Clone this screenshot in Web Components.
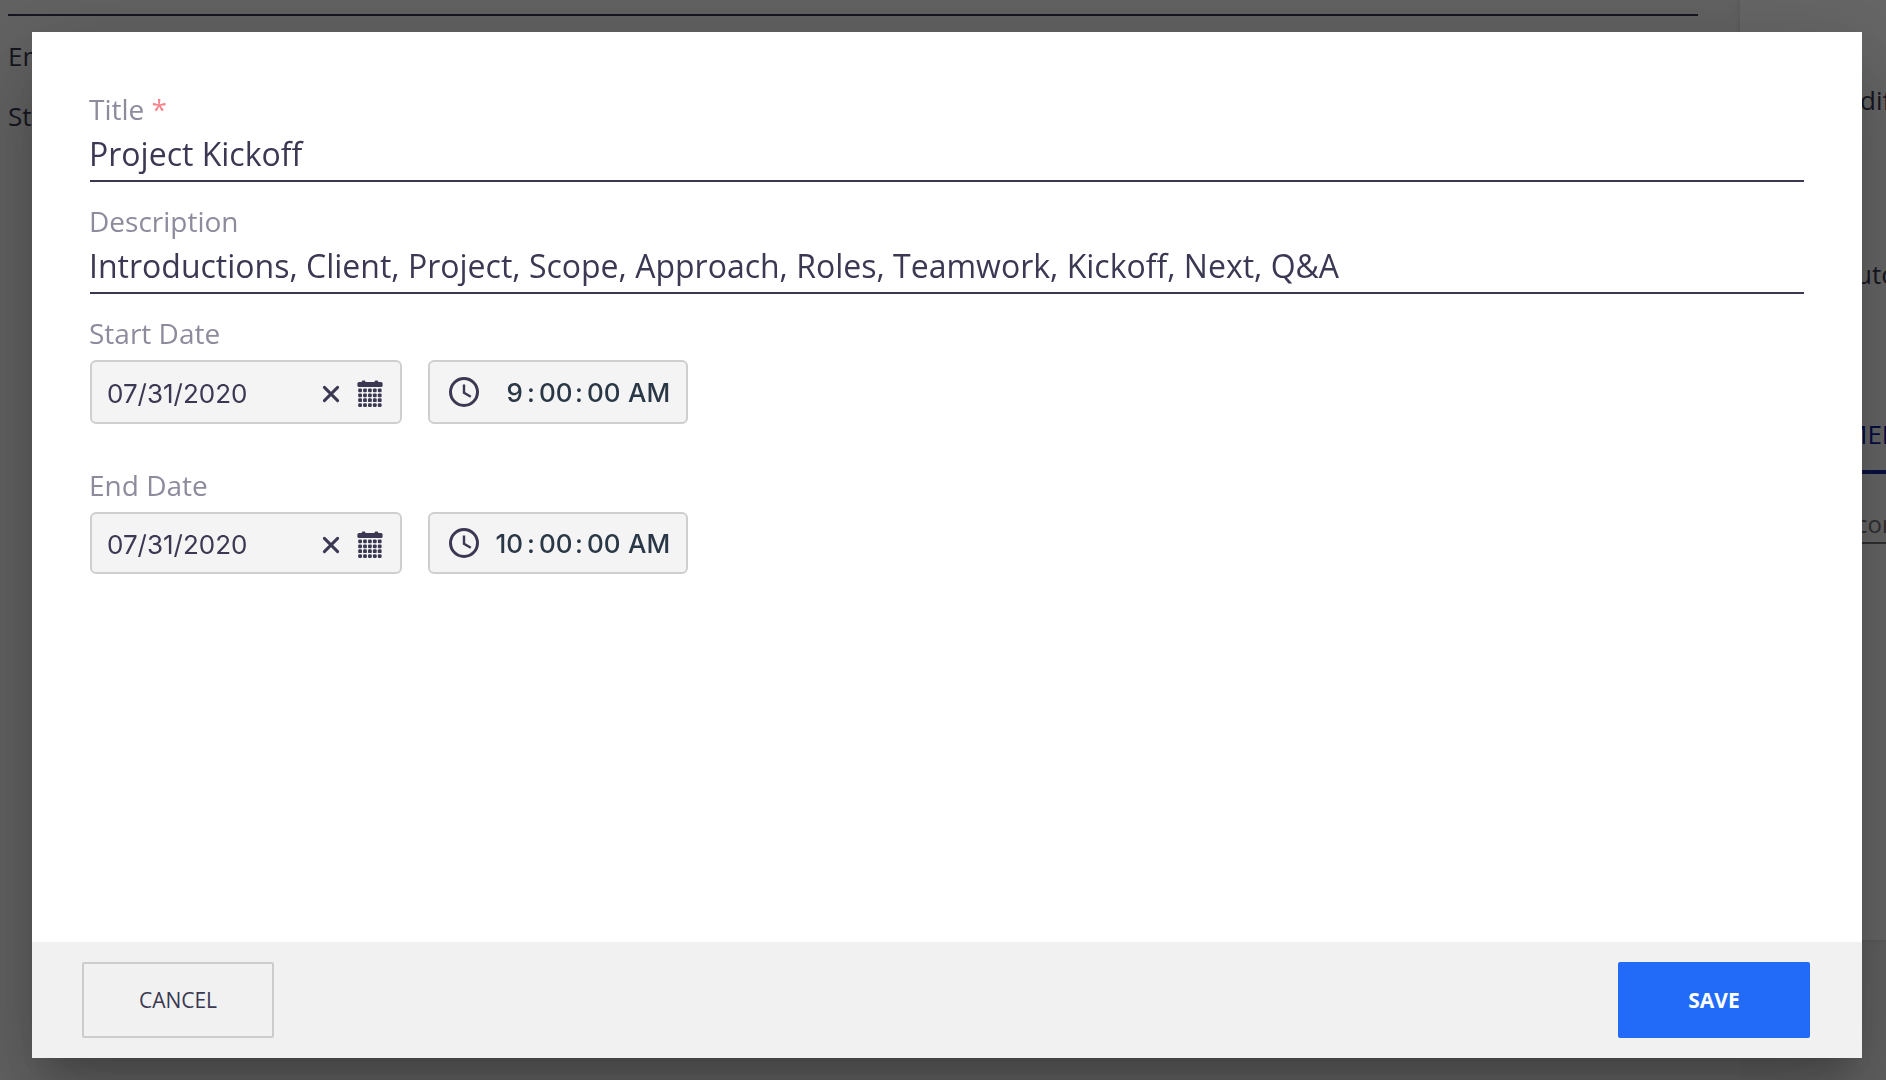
<!DOCTYPE html>
<html lang="en">
<head>
<meta charset="utf-8">
<title>Edit event</title>
<style>
  html, body { height: 100%; margin: 0; }
  body {
    font-family: "Open Sans", "Noto Sans", sans-serif;
    color: #3a3852;
    overflow: hidden;
  }
</style>
</head>
<body>
<page-backdrop></page-backdrop>
<modal-dialog>
  <text-field label="Title" value="Project Kickoff" required></text-field>
  <text-field label="Description" value="Introductions, Client, Project, Scope, Approach, Roles, Teamwork, Kickoff, Next, Q&amp;A"></text-field>
  <date-time-field label="Start Date" date="07/31/2020" hour="9"></date-time-field>
  <date-time-field class="end" label="End Date" date="07/31/2020" hour="10"></date-time-field>
  <action-button slot="actions">CANCEL</action-button>
  <action-button slot="actions" primary>SAVE</action-button>
</modal-dialog>

<script>
class PageBackdrop extends HTMLElement {
  constructor() {
    super();
    this.attachShadow({ mode: 'open' }).innerHTML = `
      <style>
        :host { display: grid; grid-template-columns: 1fr 146px; height: 100vh; background: #f0f0f0;
          font-size: 26px; line-height: 36px; white-space: nowrap; overflow: hidden; }
        main { padding: 14px 42px 0 8px; background: #f4f4f4; }
        .rule { height: 2px; background: #3a3852; margin-bottom: 22px; }
        p { margin: 0 0 24px; }
        aside { height: 940px; box-sizing: border-box; background: #fff; padding: 82px 0 0 116px; overflow: hidden;
          box-shadow: 0 0 6px rgba(0,0,0,.12); }
        .lead { margin-bottom: 138px; padding-left: 4px; }
        .auto { margin-bottom: 124px; }
        .tab { color: #1020a8; border-bottom: 4px solid #1828a8; padding-bottom: 18px; margin: 0 0 32px -12px; }
        .search { font-size: 24px; color: #777; border-bottom: 2px solid #777; }
      </style>
      <main><div class="rule"></div><p>En</p><p>Sta</p></main>
      <aside>
        <p class="lead">dif</p>
        <p class="auto">uto</p>
        <p class="tab">MEN</p>
        <p class="search">con</p>
      </aside>`;
  }
}

class ModalDialog extends HTMLElement {
  constructor() {
    super();
    this.attachShadow({ mode: 'open' }).innerHTML = `
      <style>
        :host { position: fixed; inset: 0; display: flex; box-sizing: border-box;
          padding: 32px 24px 22px 32px; background: rgba(0,0,0,.6); }
        section { flex: 1; display: flex; flex-direction: column; background: #fff;
          box-shadow: 0 22px 30px -14px rgba(0,0,0,.2), 0 48px 76px 6px rgba(0,0,0,.14), 0 18px 92px 16px rgba(0,0,0,.12); }
        .body { flex: 1; display: flex; flex-direction: column; padding: 58px 58px 0; }
        footer { display: flex; justify-content: space-between; padding: 20px 52px 20px 50px; background: #f1f1f1; }
        ::slotted(.end) { margin-top: 42px; --box-height: 62px; }
      </style>
      <section role="dialog" aria-modal="true">
        <div class="body"><slot></slot></div>
        <footer><slot name="actions"></slot></footer>
      </section>`;
  }
}

class TextField extends HTMLElement {
  connectedCallback() {
    this.attachShadow({ mode: 'open' }).innerHTML = `
      <style>
        :host { display: flex; flex-direction: column; margin-bottom: 20px; }
        label { font-size: 28px; line-height: 38px; color: #8d8b9c; margin-left: -1px; }
        b { font-weight: 400; color: #f5848c; }
        input { font: 32px/44px "Open Sans", "Noto Sans", sans-serif; height: 54px; box-sizing: border-box;
          color: inherit; border: 0; border-bottom: 2px solid #3a3852; padding: 0 0 2px; margin: 0;
          width: 100%; background: none; outline: none; text-indent: -1px; }
      </style>
      <label for="field"><span></span></label>
      <input id="field" type="text">`;
    const root = this.shadowRoot;
    root.querySelector('span').textContent = this.getAttribute('label');
    root.querySelector('input').value = this.getAttribute('value');
    if (this.hasAttribute('required'))
      root.querySelector('label').insertAdjacentHTML('beforeend', ' <b>*</b>');
  }
}

class DateTimeField extends HTMLElement {
  connectedCallback() {
    let dots = '';
    for (let r = 0; r < 4; r++)
      for (let c = 0; c < 5; c++)
        dots += `<rect x="${1.2 + c * 4.9}" y="${8.5 + r * 4.9}" width="3.8" height="3.8" rx="1.2"/>`;
    this.attachShadow({ mode: 'open' }).innerHTML = `
      <style>
        :host { display: flex; flex-direction: column; gap: 8px; }
        label { font-size: 28px; line-height: 38px; color: #8d8b9c; margin-left: -1px; }
        .row { display: flex; gap: 26px; }
        .box { display: flex; align-items: center; box-sizing: border-box; height: var(--box-height, 64px);
          border: 2px solid #cfcfcf; border-radius: 6px; background: #f4f4f4; }
        .date { width: 312px; padding: 3px 17px 0 15px; }
        .time { width: 260px; padding: 0 16px 0 19px; color: #2a3746; }
        input, .time span { font: 26px/32px Inter, Roboto, sans-serif; color: inherit; }
        input { border: 0; padding: 0; margin: 0; background: none; outline: none; min-width: 0; }
        .date input { flex: 1; }
        .time input, .time span { font-weight: 500; padding-top: 2px; }
        .hour { width: 38px; text-align: right; margin-left: 6px; }
        .time span { width: 16px; text-align: center; }
        .part { width: 32px; text-align: center; }
        .half { width: 42px; margin-left: auto; text-align: right; }
        button { display: flex; border: 0; padding: 0; background: none; color: inherit; }
        .clear { margin-right: 17px; }
        svg { display: block; }
      </style>
      <label for="date"></label>
      <div class="row">
        <div class="box date">
          <input id="date" type="text">
          <button class="clear" aria-label="Clear date"><svg width="18" height="18" viewBox="0 0 18 18" fill="none" stroke="currentColor" stroke-width="3" stroke-linecap="round"><path d="M2.4 2.4l13.2 13.2M15.6 2.4L2.4 15.6"/></svg></button>
          <button aria-label="Open calendar"><svg width="26" height="28" viewBox="0 0 26 28" fill="currentColor"><rect x=".4" y="2" width="25.2" height="5" rx="1.6"/><rect x="4.8" y=".4" width="3.6" height="3" rx="1.2"/><rect x="17.6" y=".4" width="3.6" height="3" rx="1.2"/>${dots}</svg></button>
        </div>
        <div class="box time">
          <svg width="30" height="30" viewBox="0 0 30 30" fill="none" stroke="#3a3852"><circle cx="15" cy="15" r="13.5" stroke-width="3"/><path d="M15 7.5V15.8L21.8 19.8" stroke-width="2.4"/></svg>
          <input class="hour" aria-label="Hour"><span>:</span><input class="part" aria-label="Minutes" value="00"><span>:</span><input class="part" aria-label="Seconds" value="00"><input class="half" aria-label="AM or PM" value="AM">
        </div>
      </div>`;
    const root = this.shadowRoot;
    root.querySelector('label').textContent = this.getAttribute('label');
    root.querySelector('#date').value = this.getAttribute('date');
    root.querySelector('.hour').value = this.getAttribute('hour');
  }
}

class ActionButton extends HTMLElement {
  constructor() {
    super();
    this.attachShadow({ mode: 'open' }).innerHTML = `
      <style>
        :host { display: block; }
        button { width: 192px; height: 76px; box-sizing: border-box; border: 2px solid #cccccc; border-radius: 2px;
          background: none; color: #3a3852; font: 21px/28px "Open Sans", "Noto Sans", sans-serif; padding: 0; }
        :host([primary]) button { background: #226bf8; border-color: #226bf8; color: #fff; font-weight: 700; }
      </style>
      <button type="button"><slot></slot></button>`;
  }
}

customElements.define('page-backdrop', PageBackdrop);
customElements.define('modal-dialog', ModalDialog);
customElements.define('text-field', TextField);
customElements.define('date-time-field', DateTimeField);
customElements.define('action-button', ActionButton);
</script>
</body>
</html>
